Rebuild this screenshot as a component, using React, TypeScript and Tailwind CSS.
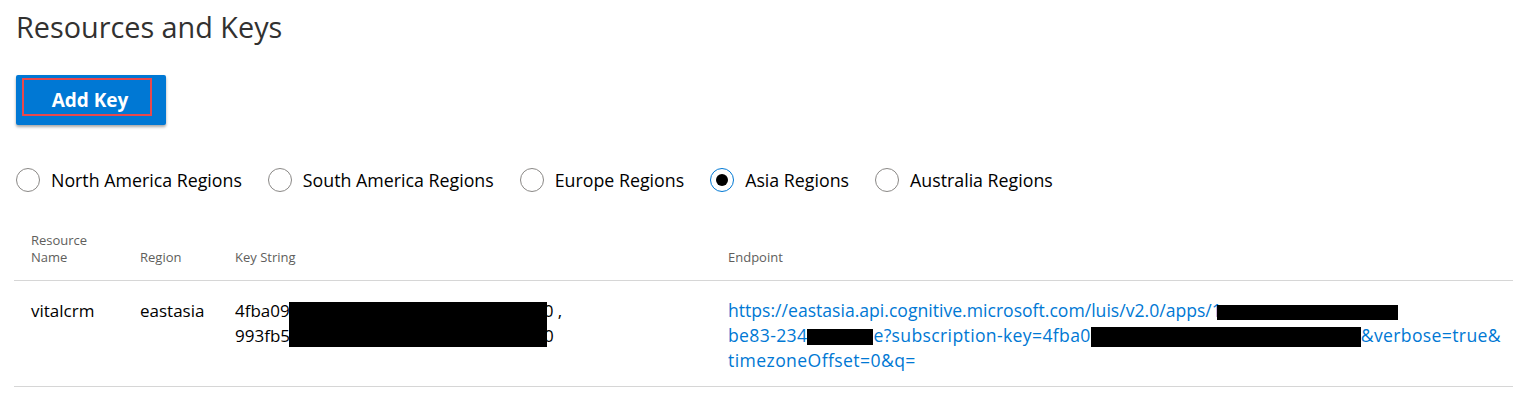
import React, { useState } from "react";

const regions = [
  "North America Regions",
  "South America Regions",
  "Europe Regions",
  "Asia Regions",
  "Australia Regions",
];

const Redact = ({ w, h }: { w: number; h: number }) => (
  <span
    className="inline-block bg-black align-middle"
    style={{ width: w, height: h }}
  />
);

const App = () => {
  const [region, setRegion] = useState("Asia Regions");

  return (
    <div className="bg-white min-h-[400px] pl-4 font-['Segoe_UI','Open_Sans',sans-serif] text-[#323130]">
      {/* タイトル */}
      <h1 className="pt-[7px] text-[28.8px] leading-[40px] font-normal">
        Resources and Keys
      </h1>

      {/* ボタン */}
      <button className="mt-[28px] w-[150px] h-[50px] bg-[#0078d4] rounded-[2px] shadow-[0_2px_3px_rgba(0,0,0,0.35)] flex items-start pl-[6px] pt-[3px]">
        <span className="w-[130px] h-[38px] border-2 border-[#e8484c] flex items-center justify-center pt-[7px] pl-[6px] text-white text-[19px] font-bold">
          Add Key
        </span>
      </button>

      {/* 地域 */}
      <div className="mt-[43px] flex items-center gap-[26px] h-[24px]">
        {regions.map((r) => (
          <label
            key={r}
            className="flex items-center gap-[11px] cursor-pointer"
            onClick={() => setRegion(r)}
          >
            <span
              className={
                region === r
                  ? "w-6 h-6 rounded-full border border-[#0078d4] flex items-center justify-center"
                  : "w-6 h-6 rounded-full border border-[#8a8886]"
              }
            >
              {region === r && (
                <span className="w-3 h-3 rounded-full bg-black" />
              )}
            </span>
            <span className="text-[17.8px] leading-6 text-black">{r}</span>
          </label>
        ))}
      </div>

      {/* テーブル */}
      <div className="mt-[40px] -ml-[2px]">
        <div className="grid grid-cols-[109px_95px_493px_1fr] border-b border-[#d6d6d6] pb-[14px] text-[13px] leading-[17px] text-[#605e5c]">
          <div className="pl-[17px] self-end">
            Resource
            <br />
            Name
          </div>
          <div className="pl-[17px] self-end">Region</div>
          <div className="pl-[17px] self-end">Key String</div>
          <div className="pl-[17px] self-end">Endpoint</div>
        </div>
        <div className="grid grid-cols-[109px_95px_493px_1fr] border-b border-[#d6d6d6] pt-[17px] pb-[13px] text-[17px] leading-[25px] text-black">
          <div className="pl-[17px]">vitalcrm</div>
          <div className="pl-[17px]">eastasia</div>
          <div className="pl-[17px]">
            <div className="relative whitespace-nowrap">
              <div>
                4fba09
                <span className="inline-block w-[254px]" />0 ,
              </div>
              <div>
                993fb5
                <span className="inline-block w-[254px]" />0
              </div>
              <span className="absolute left-[54px] top-[4px] w-[258px] h-[45px] bg-black" />
            </div>
          </div>
          <div className="pl-[17px] text-[17.6px] text-[#0078d4] whitespace-nowrap">
            <div>
              https://eastasia.api.cognitive.microsoft.com/luis/v2.0/apps/1
              <span className="inline-block -ml-[5px] w-[181px] h-[15px] bg-black align-middle" />
            </div>
            <div className="tracking-[0.35px]">
              be83-234
              <Redact w={66} h={16} />
              e?subscription-key=4fba0
              <Redact w={270} h={20} />
              &amp;verbose=true&amp;
            </div>
            <div className="tracking-[0.4px]">timezoneOffset=0&amp;q=</div>
          </div>
        </div>
      </div>
    </div>
  );
};

export default App;
